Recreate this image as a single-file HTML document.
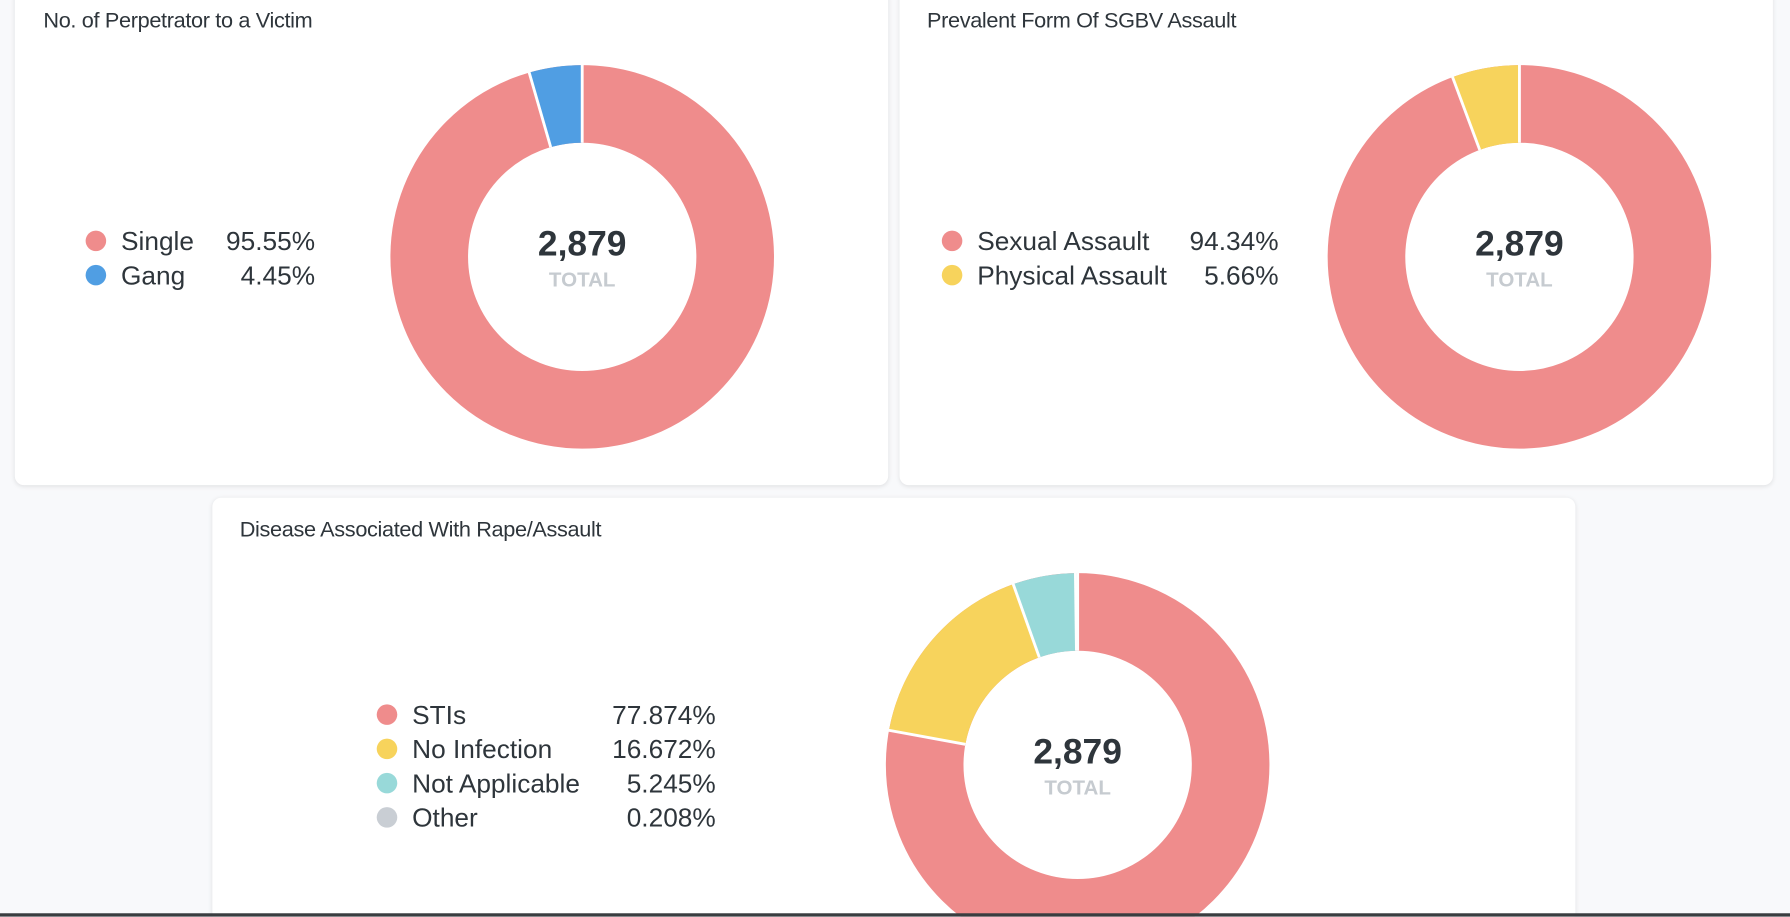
<!DOCTYPE html>
<html><head><meta charset="utf-8"><style>
html,body{margin:0;padding:0;width:1790px;height:917px;overflow:hidden;background:#f8f9fb;font-family:"Liberation Sans",sans-serif;}
#w{position:absolute;left:0;top:0;width:1568px;height:803px;overflow:hidden;transform:scale(1.14158);transform-origin:0 0;}
.card{position:absolute;background:#fff;border-radius:8px;box-shadow:0 1px 4px rgba(0,0,0,0.10);}
.t{position:absolute;font-size:19px;color:#2e353b;letter-spacing:-0.3px;}
.lg{position:absolute;font-size:23px;color:#2e353b;}
.row{position:relative;height:30px;line-height:30px;}
.dot{position:absolute;left:0;top:6px;width:18px;height:18px;border-radius:50%;}
.lbl{position:absolute;left:31px;}
.pct{position:absolute;right:0;}
.big{position:absolute;font-size:31px;font-weight:bold;color:#2e353b;text-align:center;width:200px;}
.tot{position:absolute;font-size:18px;font-weight:bold;color:#c6cbd0;text-align:center;width:200px;}
svg{position:absolute;left:0;top:0;}
.bar{position:absolute;left:0;top:800px;width:1568px;height:3px;background:#3a3d40;}
</style></head><body><div id="w">
<div class="card" style="left:13px;top:-10px;width:765px;height:435px"></div>
<div class="card" style="left:788px;top:-10px;width:765px;height:435px"></div>
<div class="card" style="left:186px;top:436px;width:1194px;height:400px"></div>

<div class="t" style="left:38px;top:8px">No. of Perpetrator to a Victim</div>
<div class="t" style="left:812px;top:8px">Prevalent Form Of SGBV Assault</div>
<div class="t" style="left:210px;top:454px">Disease Associated With Rape/Assault</div>

<svg width="1568" height="803">
<g transform="translate(510,225)">
<circle r="134" fill="none" stroke="#ef8c8c" stroke-width="68"/>
<circle r="134" fill="none" stroke="#509ee3" stroke-width="68" pathLength="100" stroke-dasharray="4.45 95.55" transform="rotate(-106.02)"/>
<line x1="0" y1="-100" x2="0" y2="-169" stroke="#fff" stroke-width="2.5"/>
<line x1="-27.6" y1="-96.1" x2="-46.6" y2="-162" stroke="#fff" stroke-width="2.5"/>
</g>
<g transform="translate(1331,225)">
<circle r="134" fill="none" stroke="#ef8c8c" stroke-width="68"/>
<circle r="134" fill="none" stroke="#f7d35c" stroke-width="68" pathLength="100" stroke-dasharray="5.66 94.34" transform="rotate(-110.38)"/>
<line x1="0" y1="-100" x2="0" y2="-169" stroke="#fff" stroke-width="2.5"/>
<line x1="-34.8" y1="-93.7" x2="-58.8" y2="-158" stroke="#fff" stroke-width="2.5"/>
</g>
<g transform="translate(944,670)">
<circle r="134" fill="none" stroke="#ef8c8c" stroke-width="68"/>
<circle r="134" fill="none" stroke="#f7d35c" stroke-width="68" pathLength="100" stroke-dasharray="16.7 83.3" transform="rotate(190.3)"/>
<circle r="134" fill="none" stroke="#98d9d9" stroke-width="68" pathLength="100" stroke-dasharray="5.3 94.7" transform="rotate(250.37)"/>
<circle r="134" fill="none" stroke="#c9ced4" stroke-width="68" pathLength="100" stroke-dasharray="0.25 99.75" transform="rotate(269.2)"/>
<line x1="0" y1="-100" x2="0" y2="-169" stroke="#fff" stroke-width="2.5"/>
<line x1="-98.4" y1="-18" x2="-166" y2="-30.4" stroke="#fff" stroke-width="2.5"/>
<line x1="-33.6" y1="-94.2" x2="-56.7" y2="-159" stroke="#fff" stroke-width="2.5"/>
<line x1="-1.3" y1="-100" x2="-2.2" y2="-169" stroke="#fff" stroke-width="2"/>
</g>
</svg>

<div class="big" style="left:410px;top:196px">2,879</div>
<div class="tot" style="left:410px;top:235px">TOTAL</div>
<div class="big" style="left:1231px;top:196px">2,879</div>
<div class="tot" style="left:1231px;top:235px">TOTAL</div>
<div class="big" style="left:844px;top:641px">2,879</div>
<div class="tot" style="left:844px;top:680px">TOTAL</div>

<div class="lg" style="left:75px;top:196px;width:201px">
<div class="row"><span class="dot" style="background:#ef8c8c"></span><span class="lbl">Single</span><span class="pct">95.55%</span></div>
<div class="row"><span class="dot" style="background:#509ee3"></span><span class="lbl">Gang</span><span class="pct">4.45%</span></div>
</div>
<div class="lg" style="left:825px;top:196px;width:295px">
<div class="row"><span class="dot" style="background:#ef8c8c"></span><span class="lbl">Sexual Assault</span><span class="pct">94.34%</span></div>
<div class="row"><span class="dot" style="background:#f7d35c"></span><span class="lbl">Physical Assault</span><span class="pct">5.66%</span></div>
</div>
<div class="lg" style="left:330px;top:611px;width:297px">
<div class="row"><span class="dot" style="background:#ef8c8c"></span><span class="lbl">STIs</span><span class="pct">77.874%</span></div>
<div class="row"><span class="dot" style="background:#f7d35c"></span><span class="lbl">No Infection</span><span class="pct">16.672%</span></div>
<div class="row"><span class="dot" style="background:#98d9d9"></span><span class="lbl">Not Applicable</span><span class="pct">5.245%</span></div>
<div class="row"><span class="dot" style="background:#c9ced4"></span><span class="lbl">Other</span><span class="pct">0.208%</span></div>
</div>
<div class="bar"></div>
</div></body></html>
